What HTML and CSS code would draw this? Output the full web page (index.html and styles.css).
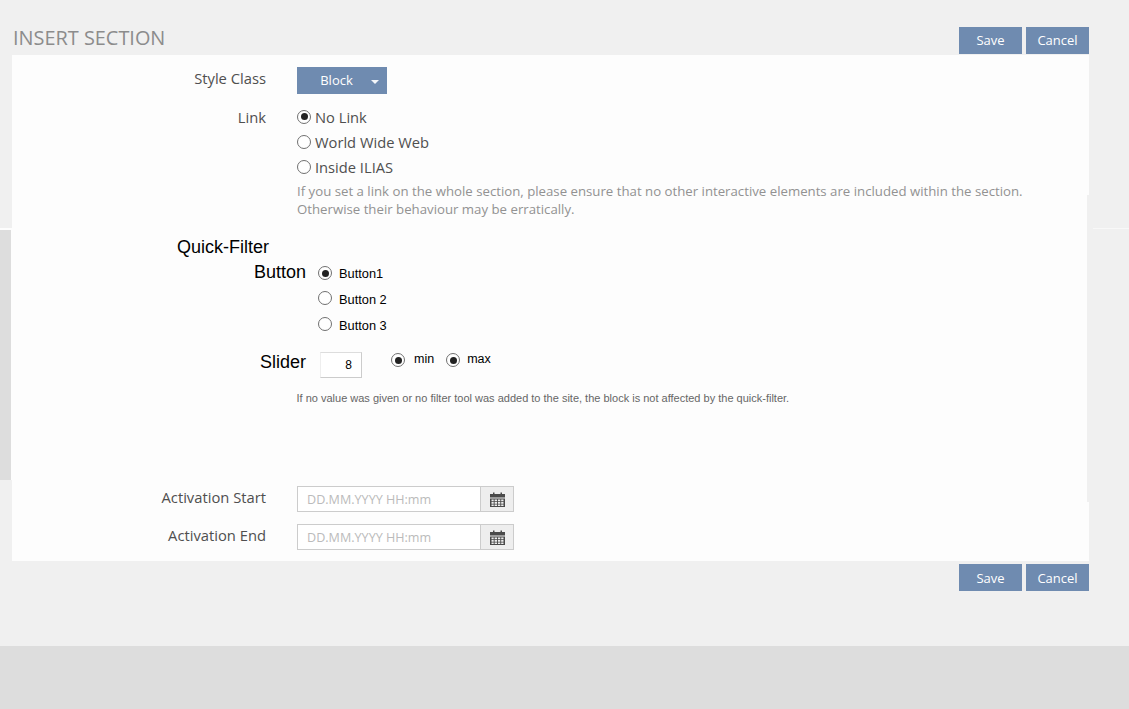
FILE: index.html
```html
<!DOCTYPE html>
<html lang="en">
<head>
<meta charset="utf-8">
<title>Insert Section</title>
<link rel="stylesheet" href="styles.css">
</head>
<body>
<div class="deco-left"></div>
<div class="deco-line"></div>
<div class="deco-notch"></div>
<main class="page">
  <header class="head">
    <h1 class="title">Insert Section</h1>
    <div class="actions">
      <button class="btn">Save</button>
      <button class="btn">Cancel</button>
    </div>
  </header>
  <form class="card">
    <div class="row row-style">
      <div class="label">Style Class</div>
      <div class="control">
        <div class="dropdown"><span class="dd-text">Block</span><span class="caret"></span></div>
      </div>
    </div>
    <div class="row row-link">
      <div class="label">Link</div>
      <div class="control">
        <div class="opt"><span class="radio on"></span>No Link</div>
        <div class="opt"><span class="radio"></span>World Wide Web</div>
        <div class="opt"><span class="radio"></span>Inside ILIAS</div>
        <p class="help">If you set a link on the whole section, please ensure that no other interactive elements are included within the section.<br>Otherwise their behaviour may be erratically.</p>
      </div>
    </div>
    <section class="qf">
      <div class="qf-title">Quick-Filter</div>
      <div class="qf-row button-row">
        <div class="qf-label">Button</div>
        <div class="qf-opts">
          <div class="qf-opt"><span class="radio on"></span>Button1</div>
          <div class="qf-opt"><span class="radio"></span>Button 2</div>
          <div class="qf-opt"><span class="radio"></span>Button 3</div>
        </div>
      </div>
      <div class="qf-row slider-row">
        <div class="qf-label">Slider</div>
        <div class="num">8</div>
        <div class="mm"><span class="radio on"></span><span class="mm-text">min</span><span class="radio on"></span><span class="mm-text">max</span></div>
      </div>
      <p class="qf-help">If no value was given or no filter tool was added to the site, the block is not affected by the quick-filter.</p>
    </section>
    <div class="row row-date">
      <div class="label">Activation Start</div>
      <div class="control">
        <div class="date">
          <div class="date-input">DD.MM.YYYY HH:mm</div>
          <div class="date-btn"><svg class="cal" viewBox="0 0 15 15" width="15" height="15"><path fill="#4a4a4a" d="M0 2h3V0.5h1.5V2h6V0.5H12V2h3v3.5H0z"/><path fill="#4a4a4a" fill-rule="evenodd" d="M0 6.5h15V15H0zM1.5 7.5v1.7h2.2V7.5zm3.1 0v1.7h2.4V7.5zm3.3 0v1.7h2.4V7.5zm3.3 0v1.7h2.3V7.5zM1.5 10v1.7h2.2V10zm3.1 0v1.7h2.4V10zm3.3 0v1.7h2.4V10zm3.3 0v1.7h2.3V10zM1.5 12.4v1.6h2.2v-1.6zm3.1 0v1.6h2.4v-1.6zm3.3 0v1.6h2.4v-1.6zm3.3 0v1.6h2.3v-1.6z"/></svg></div>
        </div>
      </div>
    </div>
    <div class="row row-date2">
      <div class="label">Activation End</div>
      <div class="control">
        <div class="date">
          <div class="date-input">DD.MM.YYYY HH:mm</div>
          <div class="date-btn"><svg class="cal" viewBox="0 0 15 15" width="15" height="15"><path fill="#4a4a4a" d="M0 2h3V0.5h1.5V2h6V0.5H12V2h3v3.5H0z"/><path fill="#4a4a4a" fill-rule="evenodd" d="M0 6.5h15V15H0zM1.5 7.5v1.7h2.2V7.5zm3.1 0v1.7h2.4V7.5zm3.3 0v1.7h2.4V7.5zm3.3 0v1.7h2.3V7.5zM1.5 10v1.7h2.2V10zm3.1 0v1.7h2.4V10zm3.3 0v1.7h2.4V10zm3.3 0v1.7h2.3V10zM1.5 12.4v1.6h2.2v-1.6zm3.1 0v1.6h2.4v-1.6zm3.3 0v1.6h2.4v-1.6zm3.3 0v1.6h2.3v-1.6z"/></svg></div>
        </div>
      </div>
    </div>
  </form>
  <div class="foot-actions">
    <button class="btn btn-foot">Save</button>
    <button class="btn btn-foot">Cancel</button>
  </div>
</main>
<footer class="footer"></footer>
</body>
</html>
```
FILE: styles.css
```css
* { box-sizing: border-box; }
html, body { margin: 0; height: 709px; overflow: hidden; }
body {
  position: relative;
  background: #f0f0f0;
  font-family: "Open Sans", sans-serif;
  color: #4f4f4f;
  font-size: 14px;
  display: flex;
  flex-direction: column;
}
.page { height: 646px; padding: 27px 40px 0 12px; }
.footer { height: 63px; background: #ddd; }

.deco-left { position: absolute; left: 0; top: 228px; width: 12px; height: 252px; background: #ddd; border-top: 2px solid #fdfdfd; border-right: 1px solid #fdfdfd; }
.deco-line { position: absolute; left: 1093px; right: 0; top: 228px; height: 1px; background: #f8f8f8; }
.deco-notch { position: absolute; left: 1087px; top: 195px; width: 2px; height: 307px; background: #f0f0f0; z-index: 2; }

.head { display: flex; justify-content: space-between; align-items: flex-start; height: 28px; }
.title { margin: -1px 0 0 1px; font-size: 19.9px; font-weight: 400; line-height: 23px; text-transform: uppercase; color: #8c8c8c; }
.actions, .foot-actions { display: flex; gap: 4px; justify-content: flex-end; }
.foot-actions { margin-top: 3px; }
.btn {
  width: 63px; height: 27px; padding: 0; border: 0; border-radius: 0;
  background: #6f8bb0; color: #fff;
  font: 400 13px/27px "Open Sans", sans-serif;
}
.btn-foot { padding-top: 1px; }

.card { background: #fdfdfd; height: 506px; position: relative; }
.row { display: flex; }
.label { width: 254px; text-align: right; font-size: 14.75px; line-height: 20px; color: #4f4f4f; flex: none; }
.control { margin-left: 31px; }

.row-style { padding-top: 12px; height: 52px; }
.row-style .label { padding-top: 1px; }
.dropdown {
  width: 90px; height: 27px; background: #6f8bb0; color: #fff;
  display: flex; align-items: center; font-size: 13px;
}
.dd-text { width: 79px; text-align: center; margin-top: -1px; }
.caret { width: 0; height: 0; border-style: solid; border-width: 4px 4px 0; border-color: #f4f6f9 transparent transparent; margin-left: -5px; margin-top: 2px; }

.row-link { height: 130px; }
.opt { display: flex; align-items: center; height: 25px; font-size: 14.7px; color: #4f4f4f; margin-top: -3px; margin-bottom: 3px; }
.opt .radio { margin-right: 4px; }
.radio {
  width: 14px; height: 14px; border: 1px solid #707070; border-radius: 50%;
  background: #fff; display: inline-block; flex: none; position: relative;
}
.radio.on::after {
  content: ""; position: absolute; left: 2.5px; top: 2.5px; width: 7px; height: 7px;
  border-radius: 50%; background: #222;
}
.help { margin: 2px 0 0; font-size: 13.23px; line-height: 18px; color: #929292; white-space: nowrap; }

.qf { height: 249px; font-family: "Liberation Sans", Arial, sans-serif; color: #000; position: relative; }
.qf-title { font-size: 18px; line-height: 20px; margin-left: 165px; }
.qf-row { display: flex; }
.qf-label { width: 294px; text-align: right; font-size: 18px; line-height: 20px; flex: none; }
.button-row { margin-top: 5px; }
.qf-opts { margin-left: 12px; margin-top: -2px; }
.qf-opt { display: flex; align-items: center; height: 26px; font-size: 12.8px; }
.qf-opt .radio { margin-right: 7px; }
.qf-opt + .qf-opt .radio { margin-top: -2px; }
.slider-row { margin-top: 14px; }
.num {
  margin-left: 14px; width: 42px; height: 26px; border: 1px solid #ccc; border-top-color: #ddd; border-left-color: #eee;
  background: #fff; font-size: 12px; line-height: 24px; text-align: right; padding-right: 9px; flex: none;
}
.mm { display: flex; align-items: flex-start; margin-left: 29px; font-size: 12.5px; line-height: 14px; }
.mm .radio { margin-top: 1px; }
.mm-text { margin-left: 9px; margin-right: 12px; }
.mm-text:last-child { margin-right: 0; margin-left: 7px; }
.qf-help { margin: 13px 0 0 284.5px; font-size: 11px; line-height: 14px; color: #666; white-space: nowrap; }

.row-date { height: 38px; }
.row-date2 { height: 37px; }
.date { display: flex; width: 217px; height: 26px; border: 1px solid #ccc; background: #fff; }
.date-input { width: 182px; padding-left: 9px; font-size: 12.6px; line-height: 25px; color: #bbb; }
.date-btn { flex: 1; background: #eee; border-left: 1px solid #ccc; display: flex; align-items: center; justify-content: center; }
.row-date .label, .row-date2 .label { line-height: 22px; }
```
